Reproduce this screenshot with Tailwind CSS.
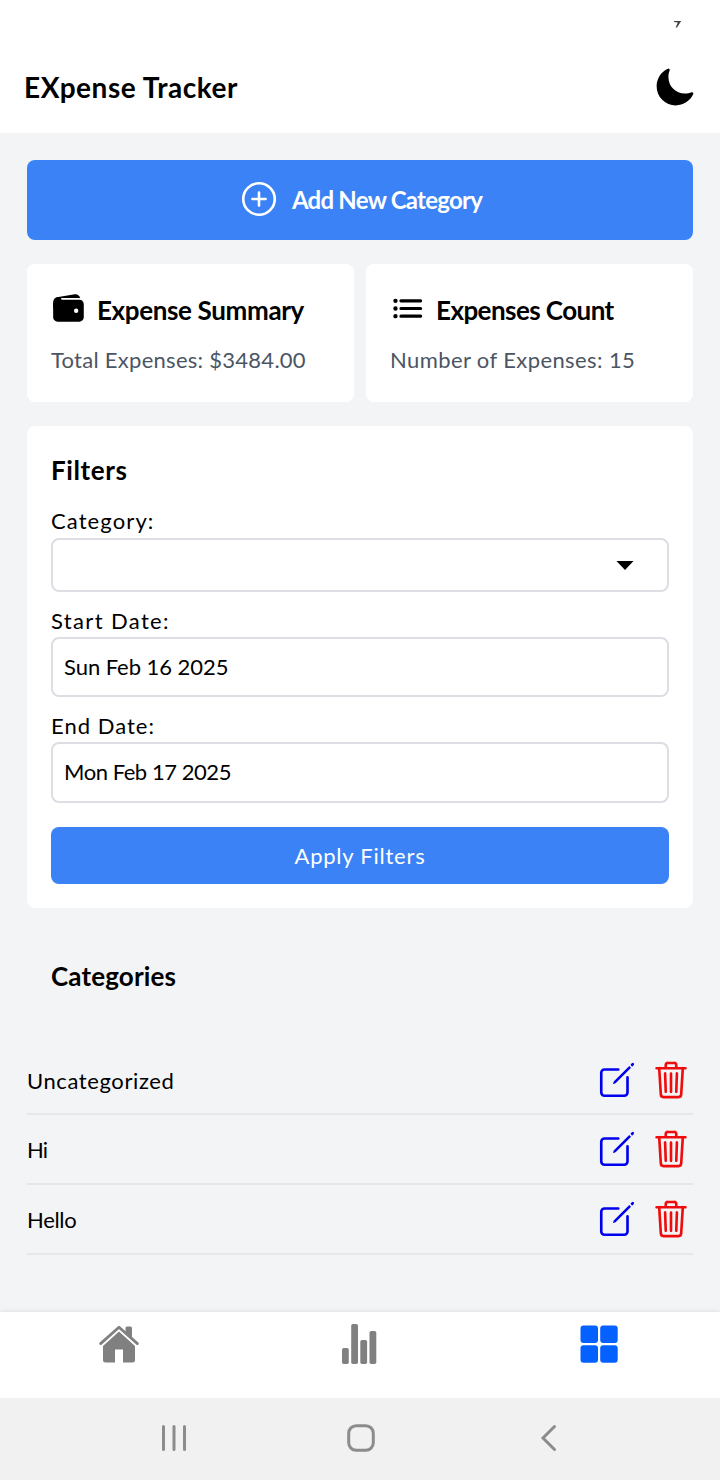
<!DOCTYPE html>
<html lang="en"><head><meta charset="utf-8"><title>Expense Tracker</title>
<script src="https://cdn.jsdelivr.net/npm/@tailwindcss/browser@4"></script></head>
<body class="bg-[#f3f4f6]">
<svg class="hidden">
<symbol id="edit" viewBox="0 0 512 512"><path d="M384 224v184a40 40 0 01-40 40H104a40 40 0 01-40-40V168a40 40 0 0140-40h167.48" fill="none" stroke="currentColor" stroke-width="32" stroke-linecap="round" stroke-linejoin="round"/><path fill="currentColor" d="M459.94 53.25a16.06 16.06 0 00-23.22-.56L424.35 65a8 8 0 000 11.31l11.34 11.32a8 8 0 0011.34 0l12.06-12c6.1-6.09 6.67-16.01.85-22.38zM399.34 90L218.82 270.2a9 9 0 00-2.31 3.93L208.16 299a3.91 3.91 0 004.86 4.86l24.85-8.35a9 9 0 003.93-2.31L422 112.66a9 9 0 000-12.66l-9.95-10a9 9 0 00-12.71 0z"/></symbol>
<symbol id="trash" viewBox="0 0 512 512"><path d="M112 112l20 320c.95 18.49 14.4 32 32 32h184c17.67 0 30.87-13.51 32-32l20-320M80 112h352M192 112V72a23.93 23.93 0 0124-24h80a23.93 23.93 0 0124 24v40M256 176v224M184 176l8 224M328 176l-8 224" fill="none" stroke="currentColor" stroke-width="32" stroke-linecap="round" stroke-linejoin="round"/></symbol>
</svg>
<div class="flex h-[1480px] w-[720px] flex-col overflow-hidden bg-[#f3f4f6] font-['Choco_Cooky','Lato',sans-serif] text-[22px] text-black">
<header class="h-[133px] bg-white px-[24px]">
<div class="flex h-[40px] justify-end pt-[21px] pr-[14px]"><svg class="h-[7px] w-[8px]" viewBox="0 0 8 7"><path d="M0 0H7.2L3 6.6H1.6L3.8 1.6L0 .9Z" fill="#444"/></svg></div>
<div class="flex h-[93px] items-center justify-between"><h1 class="text-[28px] font-bold tracking-[0.53px]">EXpense Tracker</h1>
<svg class="size-[42px]" viewBox="0 0 512 512"><path d="M264 480A232 232 0 0132 248c0-94 54-178.28 137.61-214.67a16 16 0 0121.06 21.06C181.07 76.43 176 104.66 176 136c0 110.28 89.72 200 200 200 31.34 0 59.57-5.07 81.61-14.67a16 16 0 0121.06 21.06C442.28 426 358 480 264 480z"/></svg></div>
</header>
<main class="h-[1178px] px-[27px] pt-[27px]">
<button class="flex h-[80px] w-full items-center justify-center gap-[12px] rounded-lg bg-[#3b82f6] text-[24px] font-bold text-white"><svg class="mb-[2px] size-[42px]" viewBox="0 0 512 512" fill="none" stroke="currentColor" stroke-width="32" stroke-linecap="round"><circle cx="256" cy="256" r="192"/><path d="M256 176v160M336 256H176"/></svg><span class="tracking-[-0.75px]">Add New Category</span></button>
<section class="mt-6 grid grid-cols-2 gap-3">
<div class="h-[138px] rounded-lg bg-white p-6"><h2 class="flex h-[42px] items-center gap-[11px] text-[26px] font-bold"><svg class="mb-px size-[35px]" viewBox="0 0 512 512"><path d="M95.5 104h320a87.73 87.73 0 0111.18.71 66 66 0 00-77.51-55.56L86 92.3h-.22a66 66 0 00-43.07 27.53A87.57 87.57 0 0195.5 104zM415.5 128h-320a64.07 64.07 0 00-64 64v192a64.07 64.07 0 0064 64h320a64.07 64.07 0 0064-64V192a64.07 64.07 0 00-64-64zM368 320a32 32 0 1132-32 32 32 0 01-32 32z"/><path d="M32 259.5V160c0-21.67 12-58 53.65-65.87C121 87.5 156 87.5 156 87.5s23 16 4 16-18.5 24.5 0 24.5 0 23.5 0 23.5L85.5 236z"/></svg><span class="mt-[2px] tracking-[-0.36px]">Expense Summary</span></h2><p class="mt-3 leading-[36px] tracking-[0.27px] text-[#4b5563]">Total Expenses: $3484.00</p></div>
<div class="h-[138px] rounded-lg bg-white p-6"><h2 class="flex h-[42px] items-center gap-[11px] text-[26px] font-bold"><svg class="mb-px size-[35px]" viewBox="0 0 512 512" stroke="currentColor" stroke-linecap="round"><path d="M160 144h288M160 256h288M160 368h288" stroke-width="46"/><g stroke-width="32"><circle cx="80" cy="144" r="16"/><circle cx="80" cy="256" r="16"/><circle cx="80" cy="368" r="16"/></g></svg><span class="mt-[2px] tracking-[-0.56px]">Expenses Count</span></h2><p class="mt-3 leading-[36px] tracking-[0.4px] text-[#4b5563]">Number of Expenses: 15</p></div>
</section>
<section class="mt-6 h-[482px] rounded-lg bg-white p-6">
<h2 class="text-[26px] leading-[40px] font-bold tracking-[0.6px]">Filters</h2>
<div class="mt-[14px] leading-[34px] tracking-[1.1px]">Category:</div>
<div class="flex h-[54px] items-center justify-end rounded-lg border-2 border-[#dcdee3] pr-[33px]"><svg class="h-[9px] w-[18px]" viewBox="0 0 18 9"><path d="M.5 0h17L9 9z"/></svg></div>
<div class="mt-[13px] leading-[32px] tracking-[1.36px]">Start Date:</div>
<div class="h-[60px] rounded-lg border-2 border-[#dcdee3] pl-[11px] leading-[56px] tracking-[-0.05px]">Sun Feb 16 2025</div>
<div class="mt-[13px] leading-[32px] tracking-[1.02px]">End Date:</div>
<div class="h-[61px] rounded-lg border-2 border-[#dcdee3] pl-[11px] leading-[56px] tracking-[-0.45px]">Mon Feb 17 2025</div>
<button class="mt-[24px] flex h-[57px] w-full items-center justify-center rounded-lg bg-[#3b82f6] tracking-[0.77px] text-white">Apply Filters</button>
</section>
<h2 class="mt-6 p-6 text-[26px] leading-[40px] font-bold tracking-[0.13px]">Categories</h2>
<ul class="mt-[25px]">
<li class="flex h-[70px] items-center justify-between border-b-2 border-[#e5e7eb] pr-px"><span class="mt-[2px] tracking-[0.6px]">Uncategorized</span><span class="flex gap-[12px]"><svg class="mt-[2px] size-[42px] text-[#0000ee]"><use href="#edit"/></svg><svg class="mt-[2px] size-[42px] text-[#ee0c0c]"><use href="#trash"/></svg></span></li>
<li class="flex h-[70px] items-center justify-between border-b-2 border-[#e5e7eb] pr-px"><span class="tracking-[-0.9px]">Hi</span><span class="flex gap-[12px]"><svg class="size-[42px] text-[#0000ee]"><use href="#edit"/></svg><svg class="size-[42px] text-[#ee0c0c]"><use href="#trash"/></svg></span></li>
<li class="flex h-[70px] items-center justify-between border-b-2 border-[#e5e7eb] pr-px"><span class="tracking-[-0.3px]">Hello</span><span class="flex gap-[12px]"><svg class="size-[42px] text-[#0000ee]"><use href="#edit"/></svg><svg class="size-[42px] text-[#ee0c0c]"><use href="#trash"/></svg></span></li>
</ul>
</main>
<nav class="mt-px grid h-[86px] grid-cols-3 justify-items-center bg-white pt-[11px] text-[#808080] shadow-[0_-1px_4px_rgba(0,0,0,0.08)]">
<svg class="mr-[2px] h-[42px] w-[42px]" viewBox="0 0 42 42" fill="currentColor"><path d="M27.5 9V5Q27.500 3.500 29 3.500H32.500Q34 3.500 34 5V16L27.500 10Z"/><path d="M2.600 20.600L21 4.200L39.400 20.600" fill="none" stroke="currentColor" stroke-width="2.800" stroke-linecap="round" stroke-linejoin="round"/><path d="M21 8.600L5 23V37Q5 39.500 7.500 39.500H17V26.500H25V39.500H34.500Q37 39.500 37 37V23Z"/></svg>
<svg class="h-[42px] w-[42px]" viewBox="0 0 42 42" fill="currentColor"><rect x="3" y="25" width="6.800" height="16" rx="1.800"/><rect x="12.200" y="1" width="6.800" height="40" rx="1.800"/><rect x="21.300" y="17" width="6.800" height="24" rx="1.800"/><rect x="30.500" y="8" width="6.800" height="33" rx="1.800"/></svg>
<svg class="mr-[2px] h-[42px] w-[42px]" viewBox="0 0 42 42" fill="#0461ff"><rect x="2.500" y="2.500" width="17.500" height="17.500" rx="3"/><rect x="22.200" y="2.500" width="17.500" height="17.500" rx="3"/><rect x="2.500" y="22.200" width="17.500" height="17.500" rx="3"/><rect x="22.200" y="22.200" width="17.500" height="17.500" rx="3"/></svg>
</nav>
<footer class="flex h-[82px] items-center bg-[#f1f1f1] pl-[159px] text-[#8c8c8c]">
<svg class="mb-[2px] h-[30px] w-[30px]" viewBox="0 0 30 30" fill="none" stroke="currentColor" stroke-width="3" stroke-linecap="round"><path d="M4.500 3.500V26.500M15 3.500V26.500M25.500 3.500V26.500"/></svg>
<svg class="mb-[2px] ml-[157px] h-[30px] w-[30px]" viewBox="0 0 30 30" fill="none" stroke="currentColor" stroke-width="3"><rect x="2.700" y="2.700" width="24.600" height="24.600" rx="7.500"/></svg>
<svg class="mb-[2px] ml-[164px] h-[30px] w-[24px]" viewBox="0 0 24 30" fill="none" stroke="currentColor" stroke-width="3" stroke-linecap="round"><path d="M14.500 3.500L3 15L14.500 26.500"/></svg>
</footer>
</div>
</body></html>
